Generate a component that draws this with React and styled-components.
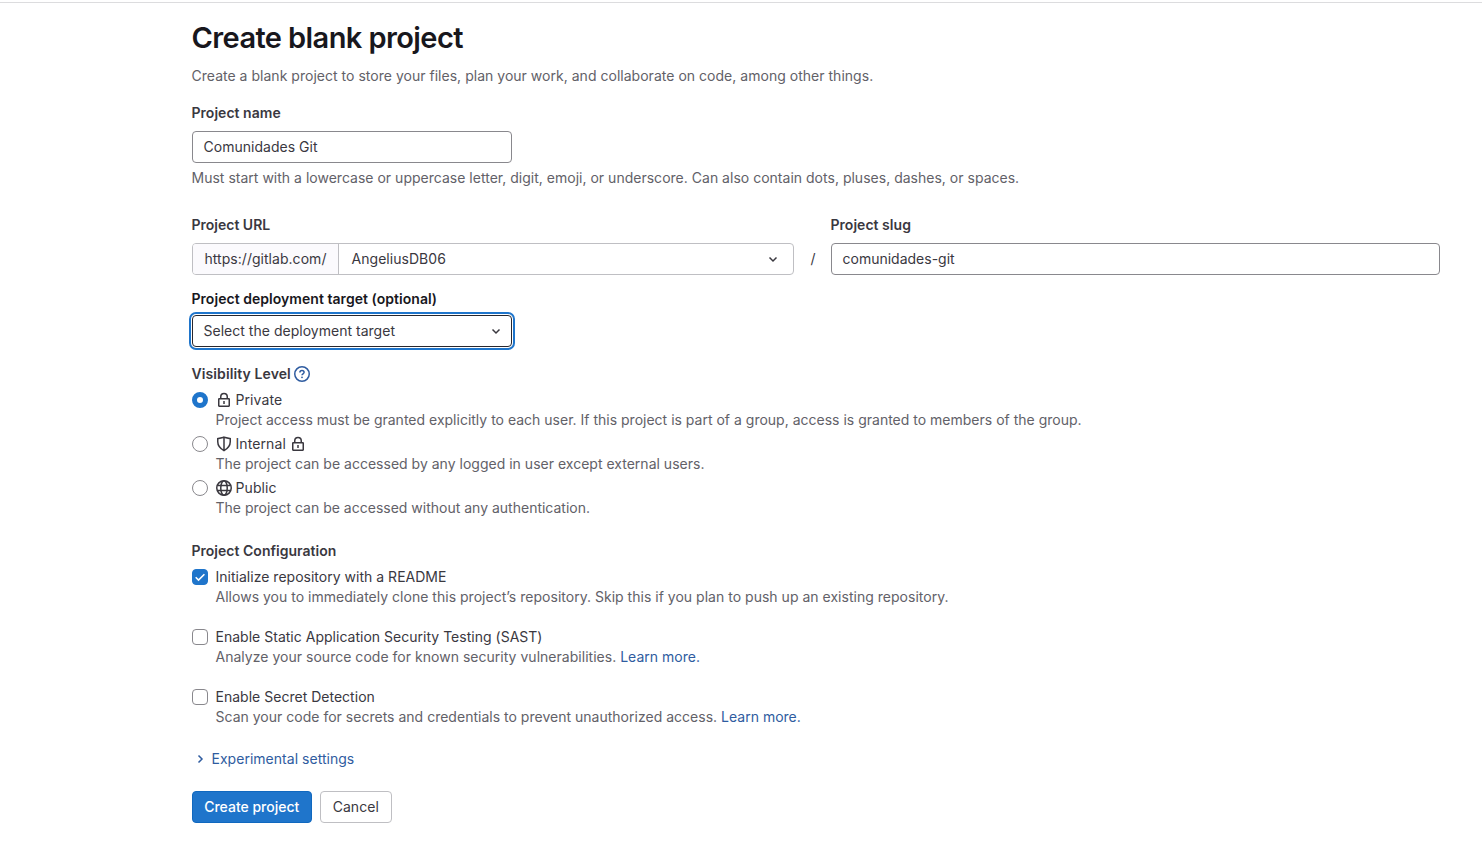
import React from "react";
import styled, { createGlobalStyle, css } from "styled-components";

const GlobalStyle = createGlobalStyle`
  *, *::before, *::after { box-sizing: border-box; }
  body {
    margin: 0;
    background: #fff;
    color: #3a383f;
    font-family: Inter, "Noto Sans", sans-serif;
    font-size: 14px;
    line-height: 20px;
  }
`;

const Page = styled.main`
  height: 845px;
  padding: 0 42px 0 192px;
  overflow: hidden;
`;
const TopRule = styled.div`
  height: 3px;
  margin: 0 -42px 0 -192px;
  padding-top: 2px;
  background: #dcdcde content-box;
`;
const Title = styled.h1`
  margin: 17px 0 0 -0.5px;
  font-size: 29px;
  line-height: 36px;
  font-weight: 600;
  letter-spacing: -0.59px;
  color: #18171d;
`;
const Text = styled.span`
  margin-left: -0.5px;
  white-space: pre;
  letter-spacing: ${(p) => p.$ls || 0}px;
`;
const Muted = styled.p`
  margin: ${(p) => p.$top || 0}px 0 0 -0.5px;
  color: #626168;
  white-space: nowrap;
  letter-spacing: ${(p) => p.$ls || 0}px;
`;
const Label = styled.div`
  display: flex;
  align-items: center;
  gap: 3px;
  height: 20px;
  margin: ${(p) => p.$top || 0}px 0 ${(p) => p.$bottom || 0}px;
  font-weight: 600;
  color: ${(p) => (p.$dark ? "#18171d" : "#3a383f")};
`;
const control = css`
  display: flex;
  align-items: center;
  height: 32px;
  border-radius: 4px;
  background: #fff;
`;
const Field = styled.div`
  ${control}
  width: ${(p) => p.$width || "100%"};
  padding: 0 11px;
  border: 1px solid #89888d;
`;
const Select = styled(Field)`
  justify-content: space-between;
  padding-right: 7px;
  border-color: #28272d;
  box-shadow: 0 0 0 1px #fff, 0 0 0 3px #1f75cb;
`;
const UrlRow = styled.div`
  display: flex;
  margin-top: 27px;
`;
const UrlColumn = styled.div`
  width: 602px;
`;
const SlugColumn = styled.div`
  flex: 1;
`;
const Slash = styled.div`
  width: 37px;
  padding: 34px 0 0 1px;
  text-align: center;
`;
const UrlGroup = styled.div`
  ${control}
  border: 1px solid #bfbfc3;
  overflow: hidden;
`;
const Prefix = styled.div`
  display: flex;
  align-items: center;
  width: 146px;
  height: 100%;
  padding-left: 12px;
  background: #fbfafd;
  border-right: 1px solid #bfbfc3;
`;
const Namespace = styled.div`
  display: flex;
  flex: 1;
  align-items: center;
  justify-content: space-between;
  padding: 0 12px 0 13px;
`;
const Icon = styled.svg`
  flex: none;
  display: block;
  width: 16px;
  height: 16px;
  fill: none;
  stroke: currentColor;
  stroke-width: 1.5;
  color: ${(p) => p.$color || "#3a383f"};
`;
const Option = styled.div`
  display: grid;
  grid-template-columns: 16px 1fr;
  column-gap: 8px;
  margin-bottom: ${(p) => p.$gap}px;
`;
const OptionTitle = styled.div`
  display: flex;
  align-items: center;
  height: 20px;
  gap: 4px;
`;
const Radio = styled.span`
  width: 16px;
  height: 16px;
  margin-top: 2px;
  border-radius: 50%;
  background: #fff;
  border: ${(p) => (p.$on ? "5px solid #1f75cb" : "1px solid #89888d")};
`;
const Checkbox = styled.span`
  width: 16px;
  height: 16px;
  margin-top: 2px;
  border-radius: 4px;
  border: 1px solid ${(p) => (p.$on ? "#1f75cb" : "#89888d")};
  background: ${(p) => (p.$on ? "#1f75cb" : "#fff")};
`;
const CheckMark = styled.svg`
  display: block;
  width: 14px;
  height: 14px;
  fill: none;
  stroke: #fff;
  stroke-width: 1.6;
`;
const Link = styled.a`
  color: #2f5ca0;
`;
const Expander = styled.div`
  display: flex;
  align-items: center;
  gap: 4px;
  height: 20px;
  margin-top: 22px;
  color: #2f5ca0;
`;
const Actions = styled.div`
  display: flex;
  gap: 8px;
  margin-top: 22px;
`;
const Button = styled.button`
  ${control}
  justify-content: center;
  width: ${(p) => p.$width}px;
  padding: 0;
  border: 1px solid ${(p) => (p.$primary ? "#1068bf" : "#bfbfc3")};
  background: ${(p) => (p.$primary ? "#1f75cb" : "#fff")};
  color: ${(p) => (p.$primary ? "#fff" : "#3a383f")};
  font: ${(p) => (p.$primary ? 500 : 400)} 14px/20px Inter, sans-serif;
`;

const ChevronDown = () => (
  <Icon viewBox="0 0 16 16"><path d="M4.5 6.5 8 10l3.5-3.5" /></Icon>
);
const ChevronRight = () => (
  <Icon viewBox="0 0 16 16" $color="#2f5ca0"><path d="M6.5 4.5 10 8l-3.5 3.5" /></Icon>
);
const Lock = () => (
  <Icon viewBox="0 0 16 16">
    <rect x="2.75" y="6.75" width="10.5" height="7.5" rx="0.4" />
    <path d="M4.75 6.5V4.75a3.25 3.25 0 0 1 6.5 0v1.75M8 9v3" />
  </Icon>
);
const Shield = () => (
  <Icon viewBox="0 0 16 16">
    <path d="M8 1.3 1.75 2.7v3c0 3.5 2 6.5 6.25 8.9 4.25-2.4 6.25-5.4 6.25-8.9v-3L8 1.3v13" />
  </Icon>
);
const Globe = () => (
  <Icon viewBox="0 0 16 16">
    <circle cx="8" cy="8" r="7.25" />
    <ellipse cx="8" cy="8" rx="3.25" ry="7.25" />
    <path d="M1.3 5.5h13.4M1.3 10.5h13.4" />
  </Icon>
);
const Question = () => (
  <Icon viewBox="0 0 16 16" $color="#2f5ca0">
    <circle cx="8" cy="8" r="7.25" />
    <path d="M5.9 6.4c0-1.2.9-1.9 2.1-1.9s2.1.7 2.1 1.8c0 1.5-2.1 1.5-2.1 3" />
    <circle cx="8" cy="11.3" r="0.9" fill="currentColor" stroke="none" />
  </Icon>
);

const LEVELS = [
  { name: "Private", icon: Lock, on: true, ls: 0.004, text: "Project access must be granted explicitly to each user. If this project is part of a group, access is granted to members of the group." },
  { name: "Internal", icon: Shield, locked: true, ls: 0.01, text: "The project can be accessed by any logged in user except external users." },
  { name: "Public", icon: Globe, text: "The project can be accessed without any authentication." },
];
const SETTINGS = [
  { name: "Initialize repository with a README", on: true, ls: 0.018, text: "Allows you to immediately clone this project’s repository. Skip this if you plan to push up an existing repository." },
  { name: "Enable Static Application Security Testing (SAST)", link: true, ls: 0.022, text: "Analyze your source code for known security vulnerabilities. " },
  { name: "Enable Secret Detection", link: true, ls: 0.012, text: "Scan your code for secrets and credentials to prevent unauthorized access. " },
];

export default function App() {
  return (
    <Page>
      <GlobalStyle />
      <TopRule />
      <Title>Create blank project</Title>
      <Muted $top={10} $ls={0.022}>Create a blank project to store your files, plan your work, and collaborate on code, among other things.</Muted>
      <Label $top={17} $bottom={8}><Text $ls={0.03}>Project name</Text></Label>
      <Field $width="320px"><Text $ls={0.02}>Comunidades Git</Text></Field>
      <Muted $top={5} $ls={0.013}>Must start with a lowercase or uppercase letter, digit, emoji, or underscore. Can also contain dots, pluses, dashes, or spaces.</Muted>

      <UrlRow>
        <UrlColumn>
          <Label $bottom={8}><Text>Project URL</Text></Label>
          <UrlGroup>
            <Prefix><Text $ls={0.035}>https://gitlab.com/</Text></Prefix>
            <Namespace><Text $ls={0.04}>AngeliusDB06</Text><ChevronDown /></Namespace>
          </UrlGroup>
        </UrlColumn>
        <Slash>/</Slash>
        <SlugColumn>
          <Label $bottom={8}><Text $ls={0.03}>Project slug</Text></Label>
          <Field><Text>comunidades-git</Text></Field>
        </SlugColumn>
      </UrlRow>

      <Label $dark $top={14} $bottom={6}><Text $ls={0.04}>Project deployment target (optional)</Text></Label>
      <Select $width="320px"><Text $ls={0.02}>Select the deployment target</Text><ChevronDown /></Select>

      <Label $top={17} $bottom={6}><Text $ls={0.1}>Visibility Level</Text><Question /></Label>
      {LEVELS.map(({ name, icon: Glyph, on, locked, ls, text }) => (
        <Option key={name} $gap={4}>
          <Radio $on={on} />
          <div>
            <OptionTitle><Glyph /><Text $ls={0.09}>{name}</Text>{locked && <Lock />}</OptionTitle>
            <Muted $ls={ls}>{text}</Muted>
          </div>
        </Option>
      ))}

      <Label $top={23} $bottom={6}><Text $ls={0.02}>Project Configuration</Text></Label>
      {SETTINGS.map(({ name, on, link, ls, text }) => (
        <Option key={name} $gap={20}>
          <Checkbox $on={on}>
            {on && <CheckMark viewBox="0 0 14 14"><path d="M2.7 7.3 5.5 10.1 11.4 4.2" /></CheckMark>}
          </Checkbox>
          <div>
            <OptionTitle><Text $ls={0.015}>{name}</Text></OptionTitle>
            <Muted $ls={ls}>{text}{link && <Link>Learn more.</Link>}</Muted>
          </div>
        </Option>
      ))}

      <Expander><ChevronRight /><Text $ls={0.025}>Experimental settings</Text></Expander>
      <Actions>
        <Button $primary $width={120}><Text>Create project</Text></Button>
        <Button $width={72}><Text $ls={0.05}>Cancel</Text></Button>
      </Actions>
    </Page>
  );
}
